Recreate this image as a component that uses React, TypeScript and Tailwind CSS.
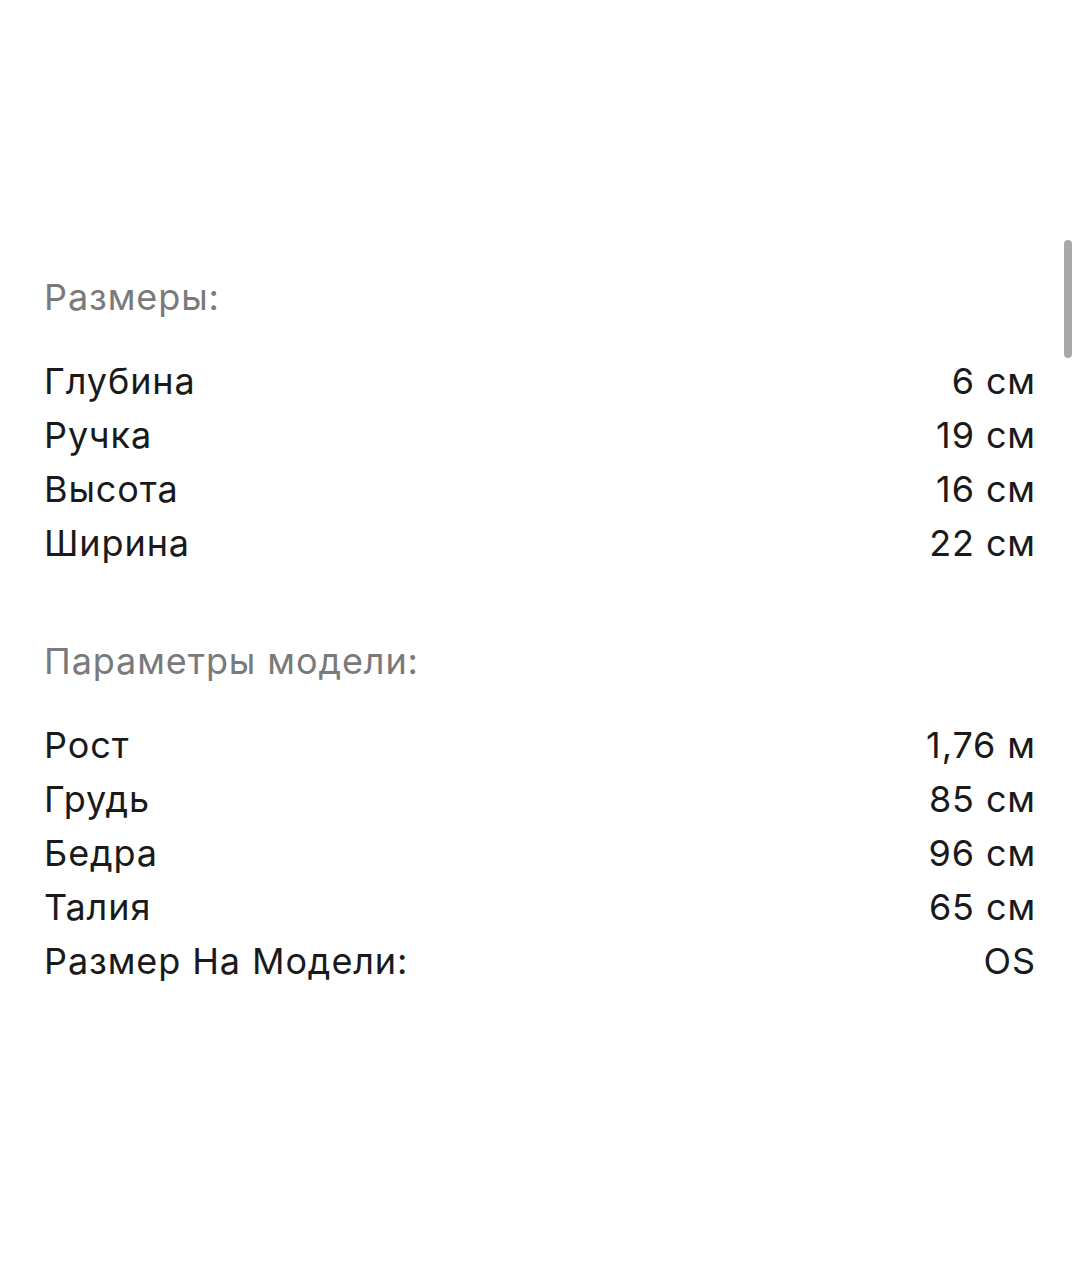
import React from 'react';

type Row = { label: string; value: string };

const sizes: Row[] = [
  { label: 'Глубина', value: '6 см' },
  { label: 'Ручка', value: '19 см' },
  { label: 'Высота', value: '16 см' },
  { label: 'Ширина', value: '22 см' },
];

const model: Row[] = [
  { label: 'Рост', value: '1,76 м' },
  { label: 'Грудь', value: '85 см' },
  { label: 'Бедра', value: '96 см' },
  { label: 'Талия', value: '65 см' },
  { label: 'Размер На Модели:', value: 'OS' },
];

const Section = ({ title, rows }: { title: string; rows: Row[] }) => (
  <div>
    <div className="text-[#7a7a7a] leading-[54px]">{title}</div>
    <div className="mt-[30px]">
      {rows.map((r) => (
        <div key={r.label} className="flex justify-between leading-[54px] text-[#1a1a1a]">
          <span>{r.label}</span>
          <span>{r.value}</span>
        </div>
      ))}
    </div>
  </div>
);

export default function App() {
  return (
    <div
      className="relative w-[1080px] h-[1280px] bg-white text-[36px] tracking-[0.9px]"
      style={{ fontFamily: 'Inter, "Noto Sans", sans-serif' }}
    >
      <div className="pl-[44px] pr-[44px] pt-[270px] flex flex-col gap-[64px]">
        <Section title="Размеры:" rows={sizes} />
        <Section title="Параметры модели:" rows={model} />
      </div>
      {/* scroll indicator */}
      <div className="absolute right-[8px] top-[240px] w-[8px] h-[118px] rounded-full bg-[#a9a9a9]" />
    </div>
  );
}
